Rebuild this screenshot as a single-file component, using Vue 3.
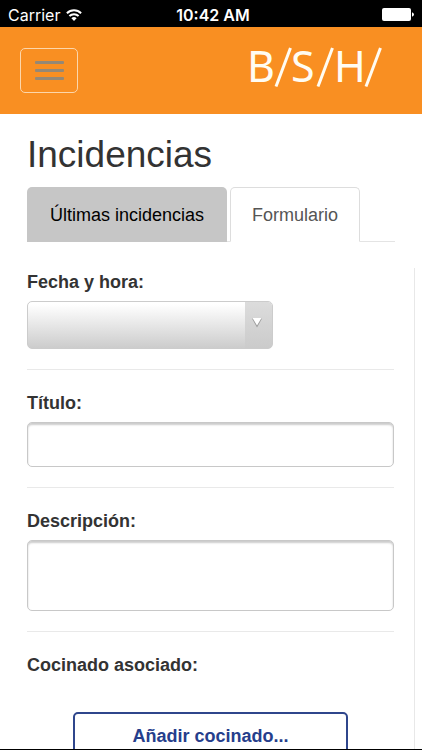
<script setup>
import { ref } from 'vue'

const activeTab = ref('formulario')
const fecha = ref('')
const titulo = ref('')
const descripcion = ref('')
const tabs = [
  { id: 'ultimas', label: 'Últimas incidencias' },
  { id: 'formulario', label: 'Formulario' },
]
</script>

<template>
  <div class="screen">
    <div class="status">
      <div class="status-side">
        <span class="carrier">Carrier</span>
        <svg class="wifi" viewBox="0 0 16 12" aria-hidden="true">
          <path d="M0.9 4.2a10.2 10.2 0 0 1 14.2 0" />
          <path d="M3.4 7a6.6 6.6 0 0 1 9.2 0" />
          <path class="dot" d="M8 11.9L5.4 9.2a3.8 3.8 0 0 1 5.2 0z" />
        </svg>
      </div>
      <span class="clock">10:42 AM</span>
      <div class="status-side end">
        <svg class="battery" viewBox="0 0 32 13" aria-hidden="true">
          <rect x="0" y="0" width="29" height="13" rx="2" />
          <path d="M30 4.3q2 .7 2 2.2t-2 2.2z" />
        </svg>
      </div>
    </div>

    <header class="navbar">
      <button class="toggle" type="button" aria-label="Menú">
        <span class="bar"></span>
        <span class="bar"></span>
        <span class="bar"></span>
      </button>
      <svg class="logo" viewBox="0 0 134 40" role="img">
        <g class="letters">
          <text x="-1" y="34">B</text>
          <text x="43" y="34">S</text>
          <text x="86" y="34">H</text>
        </g>
        <g class="slashes">
          <path d="M28 38.500L42.500 0" />
          <path d="M70 38.500L84.500 0" />
          <path d="M118 38.500L132.500 0" />
        </g>
      </svg>
    </header>

    <main class="content">
      <h1>Incidencias</h1>
      <div class="tabs" role="tablist">
        <button
          v-for="tab in tabs"
          :key="tab.id"
          class="tab"
          :class="{ active: activeTab === tab.id }"
          type="button"
          role="tab"
          :aria-selected="activeTab === tab.id"
          @click="activeTab = tab.id"
        >{{ tab.label }}</button>
      </div>

      <form class="panel" @submit.prevent>
        <div class="field">
          <label for="fecha">Fecha y hora:</label>
          <div class="picker">
            <input id="fecha" v-model="fecha" type="text" />
            <button class="open" type="button" aria-label="Abrir calendario">
              <svg viewBox="0 0 12 12" aria-hidden="true">
                <path class="shade" d="M1 1.500h10L6 10.500z" />
                <path class="face" d="M1.500 1h9L6 8.500z" />
              </svg>
            </button>
          </div>
        </div>
        <div class="field">
          <label for="titulo">Título:</label>
          <input id="titulo" v-model="titulo" class="box" type="text" />
        </div>
        <div class="field">
          <label for="descripcion">Descripción:</label>
          <textarea id="descripcion" v-model="descripcion" class="box tall"></textarea>
        </div>
        <div class="field">
          <span class="caption">Cocinado asociado:</span>
          <button class="add" type="button">Añadir cocinado...</button>
        </div>
      </form>
    </main>
  </div>
</template>

<style>
body {
  margin: 0;
  background: #fff;
}
</style>

<style scoped>
* {
  box-sizing: border-box;
}

.screen {
  display: flex;
  flex-direction: column;
  height: 100vh;
  overflow: hidden;
  border-bottom: 1px solid #000;
  font-family: "Liberation Sans", Arial, sans-serif;
  font-size: 18px;
  line-height: 24px;
  color: #333;
}

button,
input,
textarea {
  margin: 0;
  font: inherit;
  color: inherit;
}

.status {
  display: flex;
  flex: none;
  align-items: center;
  height: 27px;
  padding: 2px 8px 0;
  background: #000;
  color: #fff;
  font-family: Inter, sans-serif;
  font-size: 16px;
}

.status-side {
  display: flex;
  flex: 1;
  align-items: center;
  gap: 6px;
}

.end {
  justify-content: flex-end;
}

.clock {
  padding-left: 4px;
  font-weight: 600;
}

.wifi {
  width: 16px;
  height: 12px;
  fill: none;
  stroke: #fff;
  stroke-width: 2;
}

.wifi .dot {
  fill: #fff;
  stroke: none;
}

.battery {
  width: 32px;
  height: 13px;
  fill: #fff;
}

.navbar {
  display: flex;
  flex: none;
  align-items: center;
  justify-content: space-between;
  height: 87px;
  padding: 0 40px 0 20px;
  background: #f98f22;
}

.toggle {
  display: flex;
  flex-direction: column;
  align-items: center;
  justify-content: center;
  gap: 5px;
  width: 58px;
  height: 45px;
  padding: 0;
  border: 1px solid #fcd6ab;
  border-radius: 5px;
  background: none;
}

.bar {
  width: 29px;
  height: 3px;
  border-radius: 1px;
  background: #958875;
}

.logo {
  width: 134px;
  height: 40px;
  margin-bottom: 5px;
  overflow: visible;
}

.letters {
  fill: #fffcf3;
  font-family: "Noto Sans", sans-serif;
  font-size: 43px;
}

.slashes {
  fill: none;
  stroke: #fffcf3;
  stroke-width: 3;
}

.content {
  flex: 1;
  min-height: 0;
  padding: 21px 7px 0 27px;
  overflow: hidden;
}

h1 {
  margin: 0 0 12px;
  font-size: 37px;
  font-weight: 400;
  line-height: 40px;
}

.tabs {
  display: flex;
  gap: 3px;
  height: 55px;
  margin-right: 20px;
  border-bottom: 1px solid #e4e4e4;
}

.tab {
  height: 55px;
  padding: 0 22px;
  border: 0;
  border-radius: 5px 5px 0 0;
  background: #c6c6c6;
  color: #000;
}

.tab:not(.active) {
  padding: 0 23px;
}

.tab.active {
  padding: 0 21px;
  border: 1px solid #ddd;
  border-bottom-color: #fff;
  background: #fff;
  color: #555;
}

.panel {
  margin-top: 26px;
  padding-right: 20px;
  border-right: 1px solid #e8e8e8;
}

.field {
  display: flex;
  flex-direction: column;
  align-items: flex-start;
  padding-bottom: 20px;
}

.field + .field {
  padding-top: 19px;
  border-top: 1px solid #e9e9e9;
}

label,
.caption {
  margin-bottom: 7px;
  padding-top: 2px;
  font-weight: 700;
}

.picker {
  display: flex;
  width: 67%;
  height: 48px;
  overflow: hidden;
  border: 1px solid #ccc;
  border-radius: 5px;
  background: linear-gradient(#fff 5%, #ccc);
}

.picker input {
  flex: 1;
  min-width: 0;
  padding: 0 8px;
  border: 0;
  background: none;
}

.open {
  display: flex;
  flex: none;
  align-items: center;
  justify-content: center;
  width: 27px;
  padding: 0 2px 4px 0;
  border: 0;
  background: linear-gradient(#dcdcdc, #cbcbcb);
}

.open svg {
  width: 12px;
  height: 12px;
}

.shade {
  fill: #999;
}

.face {
  fill: #fff;
}

.box {
  display: block;
  width: 100%;
  height: 45px;
  padding: 8px;
  border: 1px solid #c8c8c8;
  border-radius: 5px;
  background: #fff;
  box-shadow: inset 0 2px 2px #ccc;
  resize: none;
}

.tall {
  height: 71px;
}

.add {
  align-self: center;
  width: 75%;
  height: 48px;
  margin-top: 28px;
  border: 2px solid #2f468c;
  border-radius: 5px;
  background: #fff;
  color: #263e8c;
  font-weight: 700;
}
</style>
